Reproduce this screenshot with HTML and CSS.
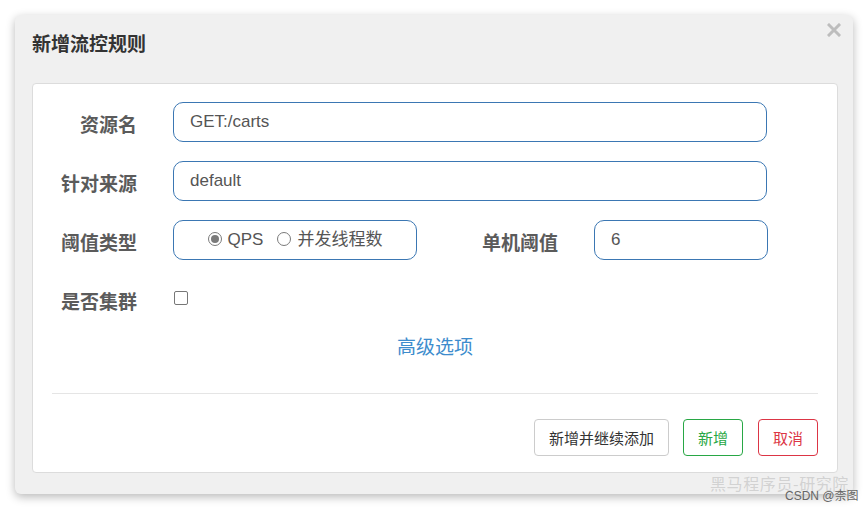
FILE: index.html
```html
<!DOCTYPE html>
<html lang="zh">
<head>
<meta charset="utf-8">
<title>新增流控规则</title>
<link rel="stylesheet" href="styles.css">
</head>
<body>
<div class="dialog">
  <div class="header">
    <h3 class="title">新增流控规则</h3>
    <span class="close" aria-label="关闭">
      <svg width="14" height="14" viewBox="0 0 14 14"><path d="M2 2 L12 12 M12 2 L2 12" stroke="#bdbdbd" stroke-width="3" stroke-linecap="square"/></svg>
    </span>
  </div>
  <div class="panel">
    <div class="form">
      <div class="row">
        <label class="label">资源名</label>
        <div class="input wide">GET:/carts</div>
      </div>
      <div class="row">
        <label class="label">针对来源</label>
        <div class="input wide">default</div>
      </div>
      <div class="row">
        <label class="label">阈值类型</label>
        <div class="radio-box">
          <span class="radio checked"></span><span class="radio-text">QPS</span>
          <span class="radio second"></span><span class="radio-text">并发线程数</span>
        </div>
        <label class="label label2">单机阈值</label>
        <div class="input narrow">6</div>
      </div>
      <div class="row">
        <label class="label">是否集群</label>
        <span class="checkbox"></span>
      </div>
    </div>
    <div class="advanced">高级选项</div>
    <div class="divider"></div>
    <div class="footer">
      <button class="btn btn-default">新增并继续添加</button>
      <button class="btn btn-success">新增</button>
      <button class="btn btn-danger">取消</button>
    </div>
  </div>
</div>
<div class="watermark">黑马程序员-研究院</div>
<div class="credit">CSDN @柰图</div>
</body>
</html>
```

FILE: styles.css
```css
html, body {
  margin: 0;
  padding: 0;
  background: #ffffff;
}
body {
  font-family: "Liberation Sans", Arial, "Noto Sans CJK SC", sans-serif;
  color: #555;
  position: relative;
  width: 867px;
  height: 510px;
  overflow: hidden;
}
.dialog {
  position: relative;
  margin: 15px 0 0 15px;
  width: 838px;
  height: 479px;
  box-sizing: border-box;
  padding: 0 15px 19px 17px;
  background: #f0f0f0;
  border-radius: 6px;
  box-shadow: 0 3px 10px rgba(0, 0, 0, 0.28);
}
.header {
  height: 68px;
  box-sizing: border-box;
  padding-top: 14px;
}
.title {
  margin: 0;
  font-size: 19px;
  line-height: 28px;
  font-weight: bold;
  color: #333;
  font-family: "Noto Sans CJK SC", sans-serif;
}
.close {
  position: absolute;
  top: 8px;
  right: 12px;
  width: 14px;
  height: 14px;
  display: block;
}
.close svg { display: block; }
.panel {
  background: #fff;
  border: 1px solid #dcdcdc;
  border-radius: 4px;
  padding: 18px 19px 16px 19px;
}
.form {
  display: flex;
  flex-direction: column;
  gap: 19px;
}
.row {
  display: flex;
  align-items: center;
  height: 40px;
}
.label {
  width: 85px;
  flex: none;
  text-align: right;
  font-size: 19px;
  font-weight: bold;
  color: #5b5b5b;
  font-family: "Noto Sans CJK SC", sans-serif;
  margin-right: 36px;
  padding-top: 2px;
  white-space: nowrap;
}
.label2 {
  margin-left: 56px;
}
.input {
  height: 40px;
  box-sizing: border-box;
  border: 1px solid #3b77b3;
  border-radius: 10px;
  padding: 0 16px;
  display: flex;
  align-items: center;
  font-size: 17px;
  color: #555;
}
.wide { width: 594px; }
.narrow { width: 174px; }
.radio-box {
  width: 244px;
  height: 40px;
  box-sizing: border-box;
  border: 1px solid #3b77b3;
  border-radius: 10px;
  display: flex;
  align-items: center;
  justify-content: center;
  font-size: 17px;
  color: #555;
  font-family: "Liberation Sans", Arial, "Noto Sans CJK SC", sans-serif;
}
.radio {
  width: 14px;
  height: 14px;
  box-sizing: border-box;
  border: 1px solid #7a7a7a;
  border-radius: 50%;
  background: #fff;
  margin-right: 6px;
  margin-top: -3px;
  position: relative;
}
.radio.checked::after {
  content: "";
  position: absolute;
  left: 2px;
  top: 2px;
  width: 8px;
  height: 8px;
  border-radius: 50%;
  background: #7a7a7a;
}
.radio.second { margin-left: 14px; }
.radio-text { line-height: 20px; }
.checkbox {
  width: 14px;
  height: 14px;
  box-sizing: border-box;
  border: 1px solid #777;
  border-radius: 2px;
  margin-left: 1px;
  margin-top: -2px;
}
.advanced {
  margin-top: 13px;
  text-align: center;
  font-size: 19px;
  line-height: 28px;
  color: #3d8ccd;
  font-family: "Noto Sans CJK SC", sans-serif;
}
.divider {
  margin-top: 33px;
  height: 1px;
  background: #e5e5e5;
}
.footer {
  margin-top: 25px;
  display: flex;
  justify-content: flex-end;
  gap: 14px;
}
.btn {
  height: 37px;
  box-sizing: border-box;
  background: #fff;
  border-radius: 4px;
  font-size: 15px;
  font-family: "Noto Sans CJK SC", sans-serif;
  padding: 0;
  cursor: pointer;
}
.btn-default {
  width: 135px;
  border: 1px solid #cccccc;
  color: #333;
}
.btn-success {
  width: 60px;
  border: 1px solid #28a745;
  color: #28a745;
}
.btn-danger {
  width: 60px;
  border: 1px solid #dc3545;
  color: #dc3545;
  margin-left: 1px;
}
.watermark {
  position: absolute;
  left: 710px;
  top: 476px;
  font-size: 16px;
  line-height: 14px;
  letter-spacing: 0.6px;
  color: rgba(180, 180, 180, 0.5);
  font-family: "Noto Sans CJK SC", sans-serif;
  white-space: nowrap;
}
.credit {
  position: absolute;
  left: 785px;
  top: 490px;
  font-size: 12px;
  line-height: 12px;
  color: #666;
  font-family: "Liberation Sans", Arial, "Noto Sans CJK SC", sans-serif;
  white-space: nowrap;
}
```
